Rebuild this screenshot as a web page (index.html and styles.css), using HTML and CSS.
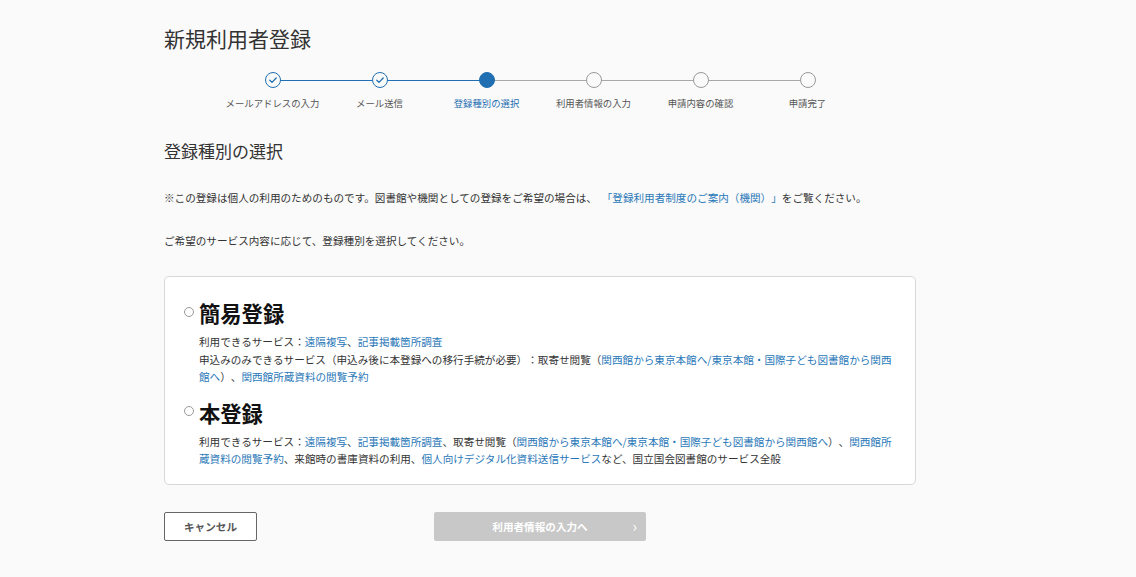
FILE: index.html
```html
<!DOCTYPE html>
<html lang="ja">
<head>
  <meta charset="UTF-8">
  <meta name="viewport" content="width=device-width, initial-scale=1.0">
  <title>新規利用者登録</title>
  <link rel="stylesheet" href="styles.css">
</head>
<body>
  <main class="page">
    <h1 class="page-title">新規利用者登録</h1>

    <!-- Progress steps -->
    <ol class="steps">
      <li class="step done">
        <span class="dot"><svg viewBox="0 0 16 16" width="16" height="16"><path d="M4.8 8.2l2.2 2.2 4.2-4.4" fill="none" stroke="#1f6fb2" stroke-width="1.3" stroke-linecap="round" stroke-linejoin="round"/></svg></span>
        <span class="label">メールアドレスの入力</span>
      </li>
      <li class="step done">
        <span class="dot"><svg viewBox="0 0 16 16" width="16" height="16"><path d="M4.8 8.2l2.2 2.2 4.2-4.4" fill="none" stroke="#1f6fb2" stroke-width="1.3" stroke-linecap="round" stroke-linejoin="round"/></svg></span>
        <span class="label">メール送信</span>
      </li>
      <li class="step current">
        <span class="dot"></span>
        <span class="label">登録種別の選択</span>
      </li>
      <li class="step">
        <span class="dot"></span>
        <span class="label">利用者情報の入力</span>
      </li>
      <li class="step">
        <span class="dot"></span>
        <span class="label">申請内容の確認</span>
      </li>
      <li class="step">
        <span class="dot"></span>
        <span class="label">申請完了</span>
      </li>
    </ol>

    <h2 class="section-title">登録種別の選択</h2>
    <p class="note">※この登録は個人の利用のためのものです。図書館や機関としての登録をご希望の場合は、&nbsp; <a href="#">「登録利用者制度のご案内（機関）」</a>をご覧ください。</p>
    <p class="lead">ご希望のサービス内容に応じて、登録種別を選択してください。</p>

    <div class="choice-card">
      <label class="choice">
        <span class="choice-head"><input type="radio" name="kind"><span class="choice-name">簡易登録</span></span>
        <span class="choice-body">
          利用できるサービス：<a href="#">遠隔複写</a>、<a href="#">記事掲載箇所調査</a><br>
          申込みのみできるサービス（申込み後に本登録への移行手続が必要）：取寄せ閲覧（<a href="#">関西館から東京本館へ/東京本館・国際子ども図書館から関西館へ</a>）、<a href="#">関西館所蔵資料の閲覧予約</a>
        </span>
      </label>
      <label class="choice">
        <span class="choice-head"><input type="radio" name="kind"><span class="choice-name">本登録</span></span>
        <span class="choice-body">
          利用できるサービス：<a href="#">遠隔複写</a>、<a href="#">記事掲載箇所調査</a>、取寄せ閲覧（<a href="#">関西館から東京本館へ/東京本館・国際子ども図書館から関西館へ</a>）、<a href="#">関西館所蔵資料の閲覧予約</a>、来館時の書庫資料の利用、<a href="#">個人向けデジタル化資料送信サービス</a>など、国立国会図書館のサービス全般
        </span>
      </label>
    </div>

    <div class="actions">
      <button class="btn-cancel">キャンセル</button>
      <button class="btn-next" disabled>利用者情報の入力へ<span class="chev">›</span></button>
    </div>
  </main>
</body>
</html>
```

FILE: styles.css
```css
:root {
  --text: #333;
  --muted: #555;
  --blue: #1f6fb2;
  --link: #2a78b8;
  --line-gray: #a8a8a8;
}
* { box-sizing: border-box; margin: 0; padding: 0; }
body {
  background: #fafafa;
  color: var(--text);
  font-family: "Noto Sans CJK JP", "Noto Sans", sans-serif;
  font-size: 10.6px;
  text-spacing-trim: space-all;
}
a { color: var(--link); text-decoration: none; }

.page {
  width: 752px;
  margin-left: 164px;
  padding-top: 22px;
}
.page-title {
  font-size: 21px; font-weight: 400;
  line-height: 32px; color: #333;
}

/* Steps */
.steps {
  list-style: none;
  display: grid; grid-template-columns: repeat(6, 107px);
  justify-content: center;
  margin-top: 18px;
}
.step {
  position: relative;
  display: flex; flex-direction: column; align-items: center;
}
.step::before {
  content: '';
  position: absolute; top: 8px; right: 50%;
  width: 107px; height: 1px;
  background: var(--line-gray);
}
.step:first-child::before { display: none; }
.step.done::before, .step.current::before { background: var(--blue); }
.dot {
  position: relative; z-index: 1;
  width: 16px; height: 16px; border-radius: 50%;
  border: 1.3px solid #999;
  background: #fafafa;
  display: flex; align-items: center; justify-content: center;
}
.dot svg { flex: none; }
.step.done .dot { border-color: var(--blue); }
.step.current .dot { border-color: var(--blue); background: var(--blue); }
.label {
  margin-top: 7px;
  font-size: 9.4px; line-height: 16px;
  color: var(--muted); white-space: nowrap;
}
.step.current .label { color: var(--blue); }

/* Section */
.section-title {
  margin-top: 27px;
  font-size: 17px; font-weight: 400; line-height: 26px;
}
.note, .lead { line-height: 18px; }
.note { margin-top: 25px; }
.lead { margin-top: 25px; }

/* Card */
.choice-card {
  margin-top: 26px;
  background: #fff;
  border: 1px solid #d8d8d8; border-radius: 5px;
  padding: 21px 18px 16px 19px;
}
.choice { display: block; }
.choice + .choice { margin-top: 12px; }
.choice-head { display: flex; align-items: center; gap: 5px; }
.choice-head input {
  appearance: none;
  width: 10px; height: 10px; border-radius: 50%;
  border: 1px solid #999; background: #fff;
  margin-top: -3px;
}
.choice-name {
  font-size: 21.3px; font-weight: 700; line-height: 30px;
  color: #111;
}
.choice-body {
  display: block;
  margin: 5px 0 0 15px;
  line-height: 17.5px;
}

/* Buttons */
.actions {
  margin-top: 27px;
  display: grid; grid-template-columns: 1fr 212px 1fr;
  align-items: center;
}
.actions button {
  height: 29px;
  font-family: inherit; font-size: 10.6px; font-weight: 700;
  cursor: pointer;
}
.btn-cancel {
  justify-self: start;
  width: 93px;
  background: #fff; color: var(--muted);
  border: 1px solid #666; border-radius: 2px;
}
.btn-next {
  position: relative;
  background: #c8c8c8; color: #fff;
  border: none; border-radius: 2px;
}
.btn-next .chev {
  position: absolute; right: 9px; top: 50%;
  transform: translateY(-52%);
  font-size: 15px; font-weight: 400;
}
```
